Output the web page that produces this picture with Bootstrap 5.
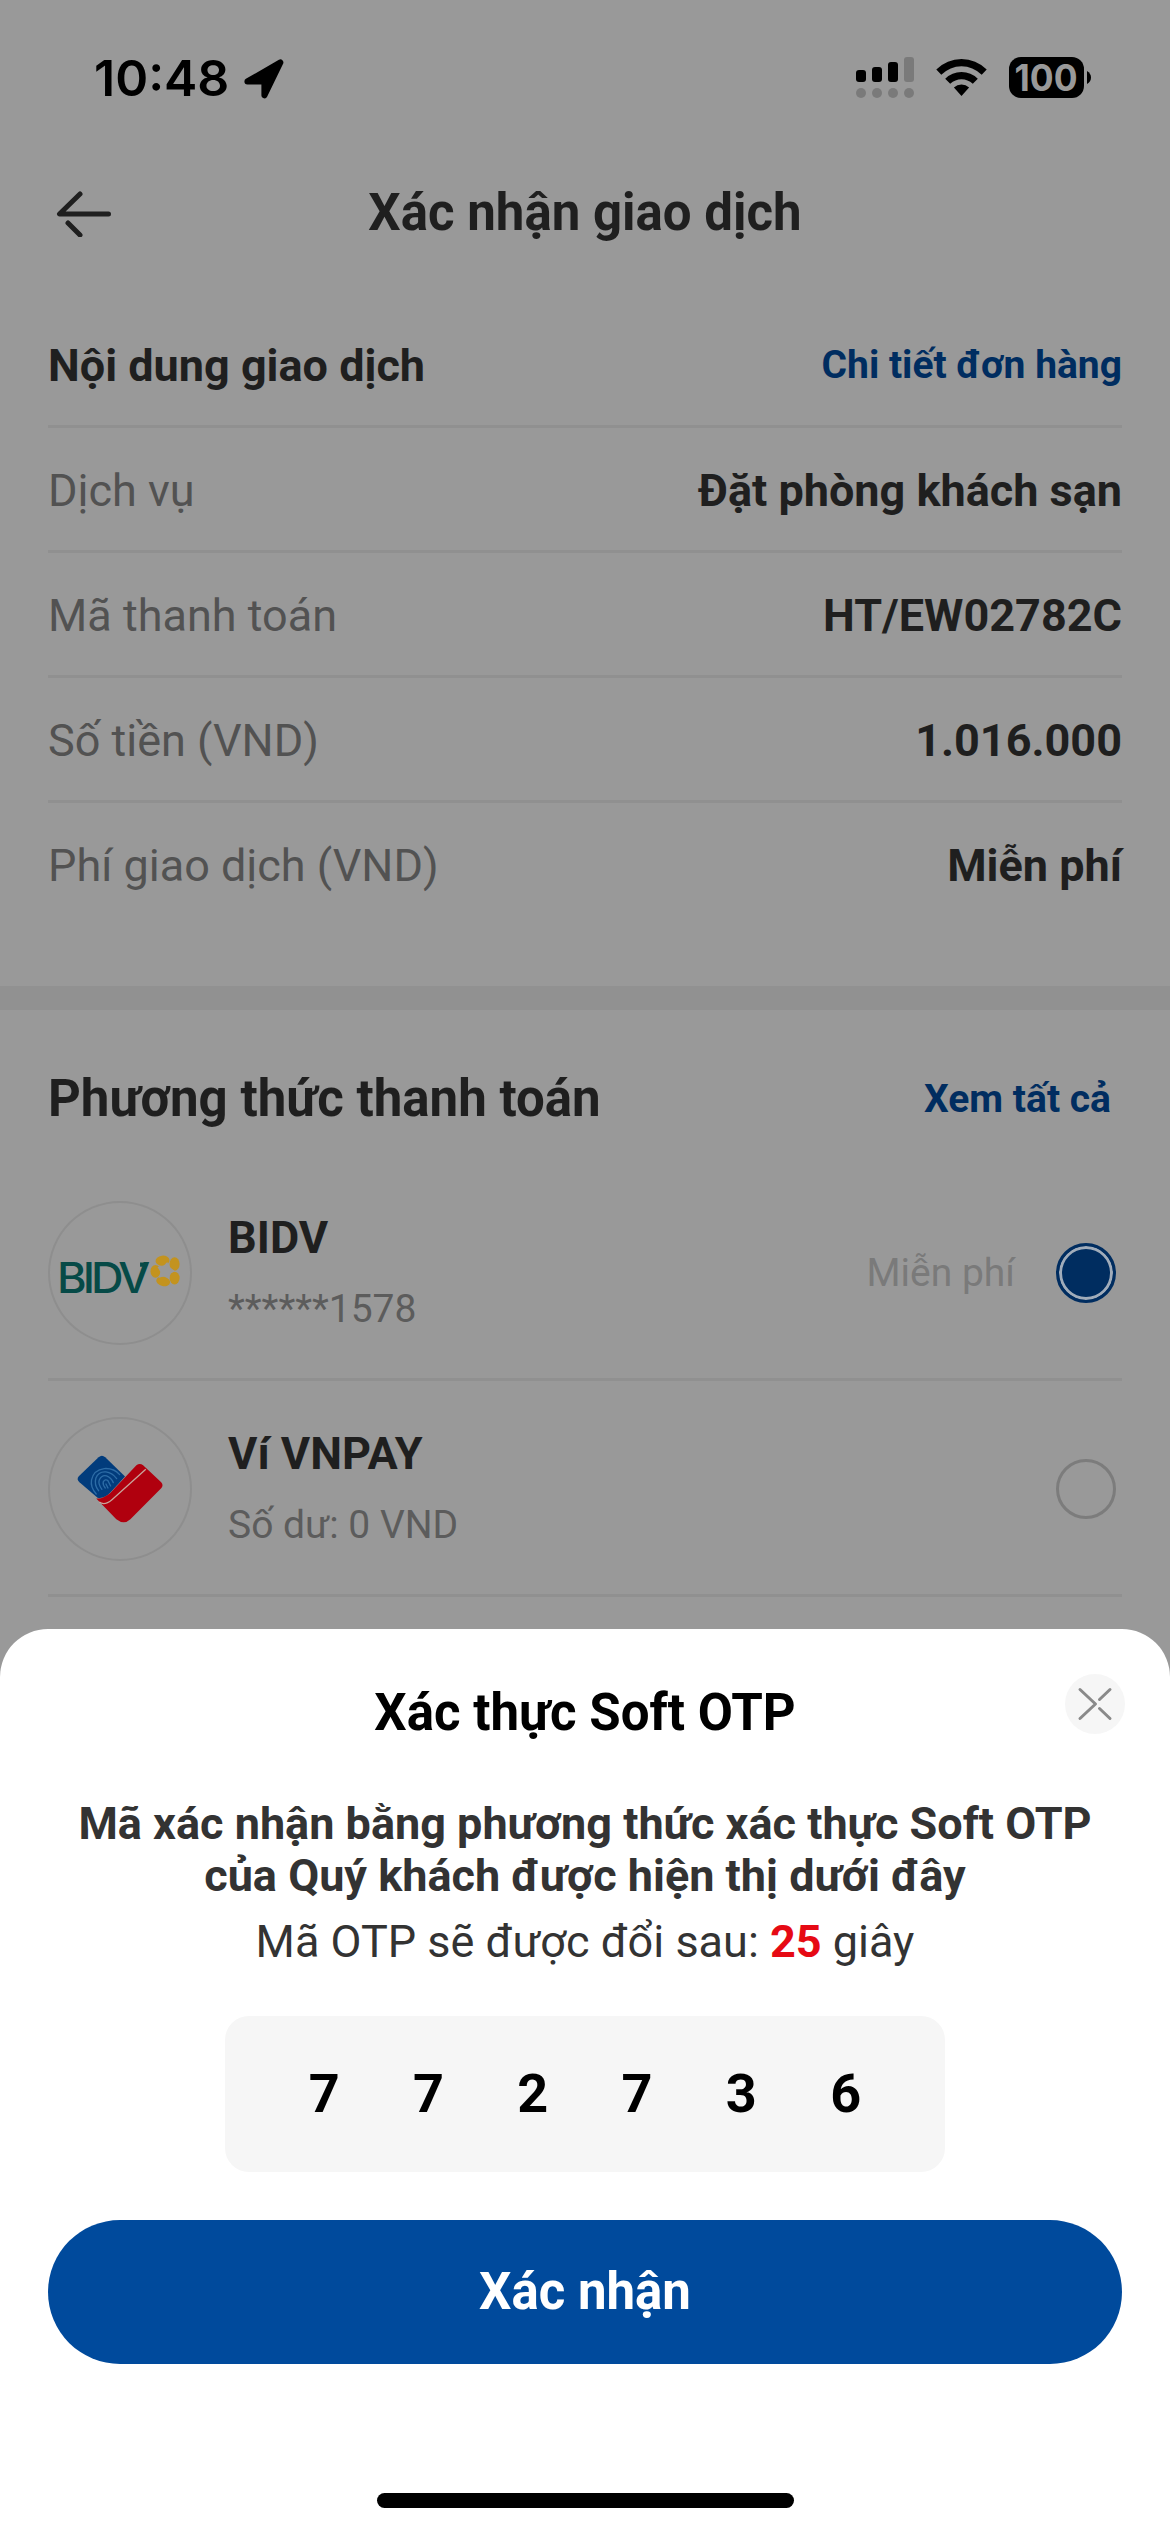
<!DOCTYPE html>
<html lang="vi">
<head>
<meta charset="utf-8">
<meta name="viewport" content="width=device-width, initial-scale=1">
<title>Xác nhận giao dịch</title>
<link rel="stylesheet" href="https://cdn.jsdelivr.net/npm/bootstrap@5.3.0/dist/css/bootstrap.min.css">
<style>
  :root { --dim: #999; --dim-line: #909090; --dim-ink: #1f1f1f; --dim-blue: #002d60; --brand: #004a9c; }
  html, body { height: 2532px; }
  body { background: var(--dim); color: var(--dim-ink); font-family: Roboto, "Noto Sans", sans-serif; font-size: 45px; line-height: 1.2; overflow: hidden; }
  svg { display: block; flex: none; }
  .status-bar { height: 141px; padding: 57px 79px 0 94px; font-family: Inter, sans-serif; color: #000; }
  .status-time { font-size: 50px; font-weight: 600; line-height: 42px; }
  .status-arrow { margin-left: 14px; }
  .status-icons { margin-top: -10px; }
  .app-header { height: 144px; padding: 0 48px; }
  .head-side { width: 72px; }
  .title-text { font-size: 51px; font-weight: 700; }
  .info-list { padding: 18px 48px 58px; }
  .info-row { height: 125px; padding-top: 3px; border-bottom: 3px solid var(--dim-line); }
  .info-row:last-child { border-bottom-color: transparent; }
  .info-label { color: #525252; }
  .dim-link { color: var(--dim-blue); font-size: 39px; font-weight: 700; text-decoration: none; }
  .band { height: 24px; background: #919191; }
  .pay-head { height: 155px; padding: 23px 59px 0 48px; }
  .pay-list { padding: 0 48px; }
  .pay-row { height: 216px; border-bottom: 3px solid var(--dim-line); padding: 3px 6px 0 0; }
  .logo-ring { width: 144px; height: 144px; margin-right: 36px; border-radius: 50%; box-shadow: inset 0 0 0 2px #8e8e8e; }
  .pay-info { padding-bottom: 5px; }
  .pay-name { line-height: 76px; font-weight: 700; }
  .pay-sub { line-height: 66px; font-size: 39px; color: #5c5c5c; }
  .pay-fee { font-size: 39px; color: #7a7a7a; margin-right: 41px; }
  .pick { width: 60px; height: 60px; border-radius: 50%; border: 3px solid #7c7c7c; }
  .pick.on { border: 3px solid var(--dim-blue); background: var(--dim-blue); box-shadow: inset 0 0 0 3px #a0acba; }
  .otp-sheet { height: 903px; border-radius: 48px 48px 0 0; background: #fff; color: #333; padding: 45px 45px 24px; }
  .sheet-side { width: 60px; }
  .sheet-title { color: #000; line-height: 60px; margin-top: 9px; }
  .close-btn { width: 60px; height: 60px; background: #f6f6f6; }
  .sheet-head { height: 124px; }
  .sheet-text { line-height: 52px; }
  .otp-timer { margin-top: 14px; }
  .countdown { color: #e60a14; }
  .code-box { width: 720px; height: 156px; margin: 48px auto; padding: 0 47px; border-radius: 24px; background: #f6f6f6; color: #000; font-size: 54px; font-weight: 700; }
  .code-digit { width: 104.3px; }
  .btn-confirm { --bs-btn-bg: var(--brand); --bs-btn-color: #fff; --bs-btn-border-width: 0; height: 144px; font-size: 51px; font-weight: 700; margin: 0 3px; }
  .home-bar { width: 417px; height: 15px; border-radius: 8px; background: #000; }
</style>
</head>
<body>
<div class="status-bar d-flex justify-content-between align-items-start">
  <div class="d-flex align-items-start">
    <span class="status-time">10:48</span>
    <svg class="status-arrow" width="42" height="42" viewBox="0 0 42 42"><path d="M5 24 38 5 22 38V24Z" stroke="#000" stroke-width="6" stroke-linejoin="round" transform="translate(-.6 .4)"/></svg>
  </div>
  <svg class="status-icons" width="238" height="64" viewBox="0 -10 238 64">
    <rect x="3" y="13" width="10" height="12" rx="3"/><rect x="19" y="10" width="10" height="15" rx="3"/><rect x="35" y="5" width="10" height="20" rx="3"/><rect x="51" y="0" width="10" height="25" rx="3" fill="#7a7a7a"/>
    <g fill="#7a7a7a"><circle cx="8" cy="36" r="5"/><circle cx="24" cy="36" r="5"/><circle cx="40" cy="36" r="5"/><circle cx="56" cy="36" r="5"/></g>
    <path d="M108.500 2q14.500 0 25.200 10.600l-5 5.200q-8.800-8.600-20.200-8.600t-20.200 8.600l-5-5.200Q94 2 108.500 2ZM108.500 15q9.500 0 16.300 6.700l-5 5q-5-4.500-11.300-4.500t-11.300 4.500l-5-5Q99 15 108.500 15ZM108.500 27.600q4.400 0 7.600 2.800l-7.600 8.700-7.600-8.700q3.200-2.800 7.600-2.800Z"/>
    <rect x="156" y="0" width="75" height="41" rx="12"/><path d="M234 14q4 2.500 4 6.500t-4 6.500Z"/>
    <text x="193" y="34" text-anchor="middle" font-family="Inter" font-size="37" font-weight="700" fill="#999" textLength="63" lengthAdjust="spacingAndGlyphs">100</text>
  </svg>
</div>
<div class="app-header d-flex align-items-center justify-content-between">
  <div class="head-side"><svg width="72" height="48" viewBox="0 0 72 48" fill="none" stroke="#1f1f1f" stroke-width="5" stroke-linecap="round" stroke-linejoin="round"><path d="M32 5 11.500 25H60.500M20 34 32 46"/></svg></div>
  <div class="title-text">Xác nhận giao dịch</div>
  <div class="head-side"></div>
</div>
<div class="info-list">
  <div class="info-row d-flex align-items-center justify-content-between"><span class="fw-bold">Nội dung giao dịch</span><a class="dim-link">Chi tiết đơn hàng</a></div>
  <div class="info-row d-flex align-items-center justify-content-between"><span class="info-label">Dịch vụ</span><span class="fw-bold">Đặt phòng khách sạn</span></div>
  <div class="info-row d-flex align-items-center justify-content-between"><span class="info-label">Mã thanh toán</span><span class="fw-bold">HT/EW02782C</span></div>
  <div class="info-row d-flex align-items-center justify-content-between"><span class="info-label">Số tiền (VND)</span><span class="fw-bold">1.016.000</span></div>
  <div class="info-row d-flex align-items-center justify-content-between"><span class="info-label">Phí giao dịch (VND)</span><span class="fw-bold">Miễn phí</span></div>
</div>
<div class="band"></div>
<div class="pay-head d-flex align-items-center justify-content-between"><span class="title-text">Phương thức thanh toán</span><a class="dim-link">Xem tất cả</a></div>
<div class="pay-list">
  <div class="pay-row d-flex align-items-center">
    <div class="logo-ring">
      <svg width="144" height="144" viewBox="55 63 430 430">
        <text transform="translate(82 338) scale(1.07 1)" font-family="Inter" font-size="126" font-weight="500" letter-spacing="-11" fill="#064a47">BIDV</text>
        <path d="M330 247h25l-5 12h-20Z" fill="#064a47"/>
        <g transform="translate(405 271)">
          <g fill="#c3931f"><ellipse cx="-29" cy="2" rx="15" ry="19"/><ellipse cx="-8" cy="-30" rx="21" ry="15" transform="rotate(-8 -8 -30)"/><ellipse cx="28" cy="-20" rx="15" ry="20"/><ellipse cx="28" cy="22" rx="15" ry="19"/><ellipse cx="-6" cy="32" rx="21" ry="14" transform="rotate(12 -6 32)"/></g>
          <path fill="#999" d="M29 1 14 9 12 25-2 17-19 21-14 4-23-11-6-13 6-26 13-11Z"/>
        </g>
      </svg>
    </div>
    <div class="pay-info flex-grow-1"><div class="pay-name">BIDV</div><div class="pay-sub">******1578</div></div>
    <span class="pay-fee">Miễn phí</span>
    <span class="pick on"></span>
  </div>
  <div class="pay-row d-flex align-items-center">
    <div class="logo-ring">
      <svg width="144" height="144" viewBox="55 712 430 430">
        <path fill="#023c7c" d="M206 832q10-9 20 0l59 58-43 47q-19 20-39 16l-54-46q-10-9-2-18Z"/>
        <g fill="none" stroke="#2d6ca6" stroke-width="4" stroke-linecap="round"><path d="M199 942q-18-20-14-42 6-30 38-34 28-2 46 18M206 932q-14-18-8-38 8-20 30-18 18 2 32 20M216 928q-12-16-8-28 8-16 22-12 14 6 20 20M226 924q-8-10-6-18 6-10 14-4l8 16M234 924l-6-12"/></g>
        <path fill="#b0000e" d="M319 856q10-8 20 0l54 51q8 9 0 18l-92 92q-19 18-42 0l-60-62q20 3 42-16Z"/>
        <path fill="none" stroke="#c9a39a" stroke-width="4" d="M208 966q16 12 38-7l101-91"/>
      </svg>
    </div>
    <div class="pay-info flex-grow-1"><div class="pay-name">Ví VNPAY</div><div class="pay-sub">Số dư: 0 VND</div></div>
    <span class="pick"></span>
  </div>
</div>
<div class="otp-sheet fixed-bottom d-flex flex-column">
  <div class="sheet-head d-flex align-items-start justify-content-between">
    <div class="sheet-side"></div>
    <div class="sheet-title title-text">Xác thực Soft OTP</div>
    <button type="button" class="close-btn btn p-0 border-0 rounded-circle" aria-label="Đóng"><svg width="60" height="60" viewBox="0 0 60 60" fill="none" stroke="#8a8a8a" stroke-width="3" stroke-linecap="round" stroke-linejoin="round"><path d="M15 15.500 30.500 30 15 44.500M45 15.500 34.500 25.500M45 44.500 34.500 34.500"/></svg></button>
  </div>
  <div class="sheet-text fw-bold text-center">Mã xác nhận bằng phương thức xác thực Soft OTP<br>của Quý khách được hiện thị dưới đây</div>
  <div class="sheet-text otp-timer text-center">Mã OTP sẽ được đổi sau: <span class="countdown fw-bold">25</span> giây</div>
  <div class="code-box d-flex align-items-center">
    <span class="code-digit text-center">7</span><span class="code-digit text-center">7</span><span class="code-digit text-center">2</span><span class="code-digit text-center">7</span><span class="code-digit text-center">3</span><span class="code-digit text-center">6</span>
  </div>
  <button type="button" class="btn btn-confirm rounded-pill">Xác nhận</button>
  <div class="home-bar mt-auto mx-auto"></div>
</div>
<script src="https://cdn.jsdelivr.net/npm/bootstrap@5.3.0/dist/js/bootstrap.bundle.min.js"></script>
</body>
</html>
